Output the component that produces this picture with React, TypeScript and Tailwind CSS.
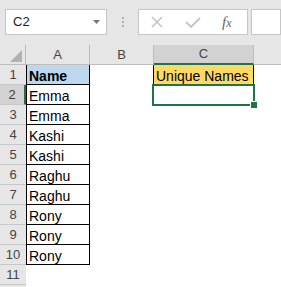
import React from 'react';

const names = ['Emma', 'Emma', 'Kashi', 'Kashi', 'Raghu', 'Raghu', 'Rony', 'Rony', 'Rony'];

const RowHead = ({ n, active }: { n?: number; active?: boolean }) => (
  <div
    className={
      'h-[20px] border-b border-[#c8c8c8] flex items-center justify-center text-[13px] text-[#444] ' +
      (active ? 'bg-[#d2d2d2] border-r-2 border-r-[#217346]' : 'bg-[#e6e6e6]')
    }
  >
    {n}
  </div>
);

export default function App() {
  return (
    <div className="w-[281px] h-[287px] overflow-hidden bg-white font-['Liberation_Sans',Arial,sans-serif] select-none">
      {/* Formula bar */}
      <div className="h-[45px] bg-[#e6e6e6] flex items-start pt-[9px] pl-[5px] whitespace-nowrap">
        <div className="w-[102px] h-[26px] shrink-0 bg-white border border-[#c6c6c6] flex items-center justify-between pl-[7px] pr-[6px] text-[13px] text-[#222]">
          <span>C2</span>
          <svg width="7" height="4" viewBox="0 0 7 4">
            <path d="M0 0 H7 L3.5 4 Z" fill="#777" />
          </svg>
        </div>
        <div className="w-[31px] h-[26px] shrink-0 flex flex-col items-center justify-center gap-[2px]">
          <span className="w-[2px] h-[2px] bg-[#b0b0b0]" />
          <span className="w-[2px] h-[2px] bg-[#b0b0b0]" />
          <span className="w-[2px] h-[2px] bg-[#b0b0b0]" />
        </div>
        <div className="w-[110px] h-[26px] shrink-0 bg-white border border-[#c6c6c6] flex items-center">
          <svg width="12" height="12" viewBox="0 0 12 12" className="ml-[12px]">
            <path d="M1 1 L11 11 M11 1 L1 11" stroke="#c4c4c4" strokeWidth="1.6" fill="none" />
          </svg>
          <svg width="16" height="11" viewBox="0 0 16 11" className="ml-[22px]">
            <path d="M1 5 L6 10 L15 1" stroke="#c4c4c4" strokeWidth="1.8" fill="none" />
          </svg>
          <span className="ml-[21px] font-['Liberation_Serif',serif] italic text-[#666] text-[15px] leading-none">
            f<span className="text-[12px]">x</span>
          </span>
        </div>
        <div className="ml-[3px] flex-1 h-[26px] bg-white border border-[#c6c6c6]" />
      </div>

      {/* Sheet grid */}
      <div className="grid grid-cols-[26px_64px_64px_100px_64px] text-[14px] text-black">
        {/* column headers */}
        <div className="h-[20px] bg-[#e6e6e6] border-b border-r border-[#bdbdbd] flex items-end justify-end pr-[3px] pb-[2px]">
          <svg width="12" height="12" viewBox="0 0 12 12" className="shrink-0 block">
            <polygon points="12,0 12,12 0,12" fill="#b1b1b1" />
          </svg>
        </div>
        <div className="h-[20px] bg-[#e6e6e6] border-b border-r border-[#bdbdbd] flex items-center justify-center text-[13px] text-[#444]">A</div>
        <div className="h-[20px] bg-[#e6e6e6] border-b border-r border-[#bdbdbd] flex items-center justify-center text-[13px] text-[#444]">B</div>
        <div className="h-[20px] bg-[#d2d2d2] border-b-2 border-b-[#217346] border-r border-r-[#bdbdbd] flex items-center justify-center text-[13px] text-[#444]">C</div>
        <div className="h-[20px] bg-[#e6e6e6] border-b border-[#bdbdbd] flex items-center justify-center text-[13px] text-[#444]">D</div>

        {/* row 1 */}
        <RowHead n={1} />
        <div className="h-[20px] bg-[#bdd7ee] border-x border-b border-black pl-[2px] pt-[2px] leading-[18px] font-bold">Name</div>
        <div className="h-[20px]" />
        <div className="h-[20px] bg-[#ffd966] border border-t-0 border-black pl-[2px] pt-[2px] leading-[18px] -ml-px">Unique Names</div>
        <div className="h-[20px]" />

        {/* rows 2-10 */}
        {names.map((nm, i) => (
          <React.Fragment key={i}>
            <RowHead n={i + 2} active={i === 0} />
            <div className="h-[20px] border-x border-b border-black pl-[2px] pt-[2px] leading-[18px]">{nm}</div>
            <div className="h-[20px]" />
            <div className="h-[20px] relative">
              {i === 0 && (
                <>
                  <div className="absolute -left-[2px] -top-[1px] -right-[1px] -bottom-[1px] border-2 border-[#217346]" />
                  <div className="absolute -right-[3px] -bottom-[3px] w-[6px] h-[6px] bg-[#217346] outline outline-1 outline-white" />
                </>
              )}
            </div>
            <div className="h-[20px]" />
          </React.Fragment>
        ))}

        {/* rows 11-12 */}
        <RowHead n={11} />
        <div className="h-[20px] col-span-4" />
        <RowHead />
        <div className="h-[20px] col-span-4" />
      </div>
    </div>
  );
}
